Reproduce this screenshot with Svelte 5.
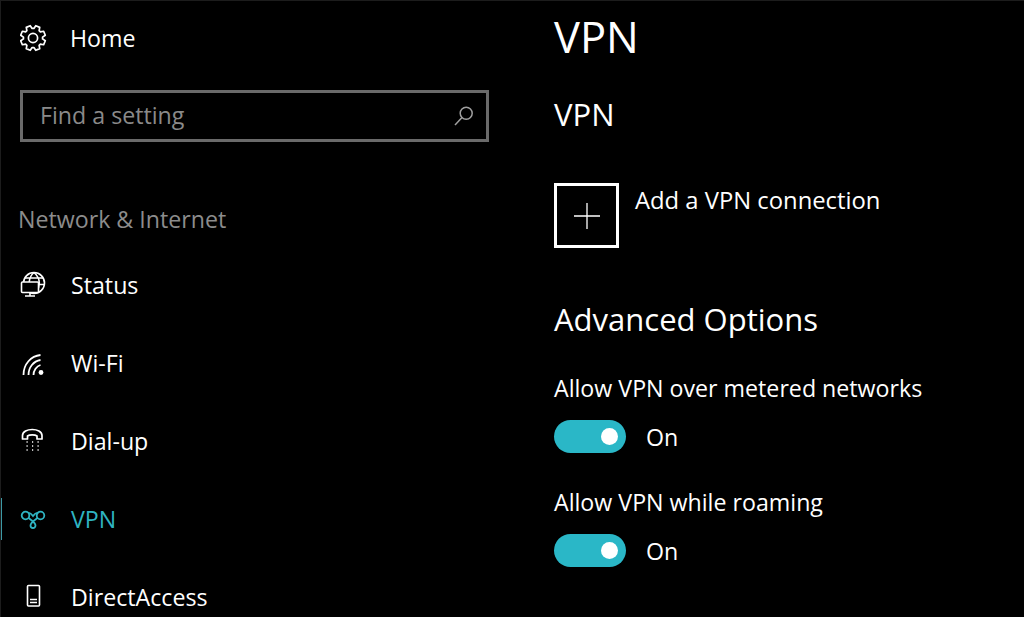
<script lang="ts">
  const navItems = [
    { id: 'status', label: 'Status' },
    { id: 'wifi', label: 'Wi-Fi' },
    { id: 'dialup', label: 'Dial-up' },
    { id: 'vpn', label: 'VPN', active: true },
    { id: 'direct', label: 'DirectAccess' }
  ];

  const options = ['Allow VPN over metered networks', 'Allow VPN while roaming'];

  // eight tooth cog outline, centred on 13,14
  function cogPath() {
    const points = [];
    for (let i = 0; i < 8; i++) {
      const a = (i * Math.PI) / 4 + Math.PI / 8;
      const spread = [
        [-0.3, 9.6],
        [-0.17, 12.6],
        [0.17, 12.6],
        [0.3, 9.6]
      ];
      for (const [d, r] of spread) {
        points.push(`${(13 + r * Math.cos(a + d)).toFixed(2)} ${(14 + r * Math.sin(a + d)).toFixed(2)}`);
      }
    }
    return 'M' + points.join('L') + 'Z';
  }
</script>

<div class="page">
  <aside class="sidebar">
    <div class="home">
      <span class="icon">
        <svg viewBox="0 0 28 28" fill="none" stroke="currentColor" stroke-width="1.7" stroke-linejoin="round">
          <circle cx="13" cy="14" r="4.600" />
          <path d={cogPath()} />
        </svg>
      </span>
      <span>Home</span>
    </div>

    <div class="search">
      <span>Find a setting</span>
      <svg viewBox="0 0 22 22" fill="none" stroke="currentColor" stroke-width="1.5">
        <circle cx="13.200" cy="8.200" r="6" />
        <path d="M9 12.600L2 20" />
      </svg>
    </div>

    <div class="section">Network &amp; Internet</div>

    <nav>
      {#each navItems as item}
        <div class="nav-item" class:active={item.active}>
          <span class="icon">
            {#if item.id === 'status'}
              <svg viewBox="0 0 28 28" fill="none" stroke="currentColor" stroke-width="1.6">
                <circle cx="14" cy="12" r="10.500" />
                <path d="M14 1.500c-3 2.500-4.500 6-4.800 9.500M14 1.500c3.500 3 5.300 7 5.300 10.500 0 3-1 6-2.800 8.500M5 7h18M19 13.500h5.500" />
                <rect x="1.500" y="11" width="17" height="10.500" rx="1" fill="#000" />
                <path d="M10 21.500v3.500M5 25h10" />
              </svg>
            {:else if item.id === 'wifi'}
              <svg viewBox="0 0 28 28" fill="none" stroke="currentColor" stroke-width="1.8">
                <path d="M3.500 26C3.500 15 11 7 20.500 6" />
                <path d="M8.500 26c0-7.500 5-14 12-15" />
                <path d="M13.500 26c0-4.500 3-9 7-10" />
                <circle cx="21" cy="23.500" r="2.400" fill="currentColor" stroke="none" />
              </svg>
            {:else if item.id === 'dialup'}
              <svg viewBox="0 0 28 28" fill="none" stroke="currentColor" stroke-width="1.7" stroke-linejoin="round">
                <path d="M2.500 12V8.500C2.500.5 22 .5 22 8.500V12h-5V9c-2-1.500-7.500-1.500-9.500 0v3z" />
                <path d="M6.500 15h1.200M12 15h1.200M17.500 15h1.200M6.500 19h1.200M12 19h1.200M17.500 19h1.200M6.500 23h1.200M12 23h1.200M17.500 23h1.200" />
              </svg>
            {:else if item.id === 'vpn'}
              <svg viewBox="0 0 28 28" fill="none" stroke="currentColor" stroke-width="1.8">
                <circle cx="5.500" cy="10.500" r="3.800" />
                <circle cx="20.500" cy="10.500" r="3.800" />
                <path d="M8 7.500c2 .5 3.500 1.500 5 3.500 1.500-2 3-3 5-3.500" />
                <path d="M17.500 13c-2.500 2-7 4-7 7.500a2.500 2.500 0 0 0 5 0c0-3.500-4.500-5.500-7-7.500" />
              </svg>
            {:else}
              <svg viewBox="0 0 28 28" fill="none" stroke="currentColor" stroke-width="1.6">
                <rect x="7.500" y="2.500" width="12" height="20.500" rx="1" />
                <path d="M10 16.500h7M10 19.500h7" />
              </svg>
            {/if}
          </span>
          <span>{item.label}</span>
        </div>
      {/each}
    </nav>
  </aside>

  <main class="content">
    <h1>VPN</h1>
    <h2>VPN</h2>

    <div class="add">
      <span class="add-box">
        <svg viewBox="0 0 28 28" fill="none" stroke="currentColor" stroke-width="1.300">
          <path d="M14 1v26M1 14h26" />
        </svg>
      </span>
      <span class="add-label">Add a VPN connection</span>
    </div>

    <h2 class="advanced">Advanced Options</h2>

    {#each options as option}
      <div class="option">
        <div class="option-label">{option}</div>
        <div class="toggle-row">
          <span class="toggle"><span class="knob"></span></span>
          <span class="state">On</span>
        </div>
      </div>
    {/each}
  </main>
</div>

<style>
  :global(body) {
    background: #000;
  }

  .page {
    display: grid;
    grid-template-columns: 553px 1fr;
    height: 617px;
    overflow: hidden;
    box-sizing: border-box;
    background: #000;
    color: #fff;
    border-top: 1px solid #1c1c1c;
    border-left: 1px solid #1c1c1c;
    font-family: "Open Sans", "Noto Sans", sans-serif;
    font-size: 23.200px;
  }

  .sidebar {
    padding-left: 19px;
  }

  .icon {
    display: flex;
    justify-content: center;
    width: 28px;
    flex: none;
  }

  .icon svg {
    width: 28px;
    height: 28px;
  }

  .home {
    display: flex;
    align-items: center;
    gap: 22px;
    height: 28px;
    margin-top: 23px;
  }

  .search {
    display: flex;
    align-items: center;
    justify-content: space-between;
    box-sizing: border-box;
    width: 469px;
    height: 52px;
    margin-top: 38px;
    padding: 0 11px 3px 17px;
    border: 3px solid #6a6a6a;
    color: #8a8a8a;
  }

  .search svg {
    width: 22px;
    height: 22px;
    margin-top: 3px;
    color: #a0a0a0;
  }

  .section {
    margin-top: 61px;
    margin-left: -2px;
    color: #8c8c8c;
  }

  nav {
    margin-top: 11px;
    margin-left: -19px;
  }

  .nav-item {
    display: flex;
    align-items: center;
    gap: 23px;
    height: 78px;
    padding-left: 19px;
    position: relative;
  }

  .nav-item.active {
    color: #2fb4c2;
  }

  .nav-item.active::before {
    content: "";
    position: absolute;
    left: -1px;
    top: 18px;
    width: 2px;
    height: 42px;
    background: #3d9aa5;
  }

  h1,
  h2 {
    margin: 0;
    font-weight: 400;
  }

  h1 {
    font-size: 43.500px;
    line-height: 56px;
    margin-top: 8px;
  }

  h2 {
    font-size: 31px;
    line-height: 40px;
    margin-top: 29px;
  }

  .add {
    display: flex;
    gap: 16px;
    margin-top: 49px;
  }

  .add-box {
    display: flex;
    align-items: center;
    justify-content: center;
    box-sizing: border-box;
    width: 65px;
    height: 65px;
    border: 3px solid #fff;
  }

  .add-box svg {
    width: 28px;
    height: 28px;
  }

  .add-label {
    font-size: 23.800px;
    line-height: 34px;
  }

  h2.advanced {
    margin-top: 51px;
  }

  .option {
    margin-top: 33px;
  }

  .option-label {
    line-height: 32px;
  }

  .toggle-row {
    display: flex;
    align-items: center;
    gap: 20px;
    height: 34px;
    margin-top: 15px;
  }

  .state {
    padding-top: 2px;
  }

  .toggle {
    display: flex;
    align-items: center;
    justify-content: flex-end;
    box-sizing: border-box;
    width: 72px;
    height: 33px;
    padding-right: 8px;
    border-radius: 17px;
    background: #2ab7c7;
  }

  .knob {
    width: 17px;
    height: 17px;
    border-radius: 50%;
    background: #fff;
  }
</style>
